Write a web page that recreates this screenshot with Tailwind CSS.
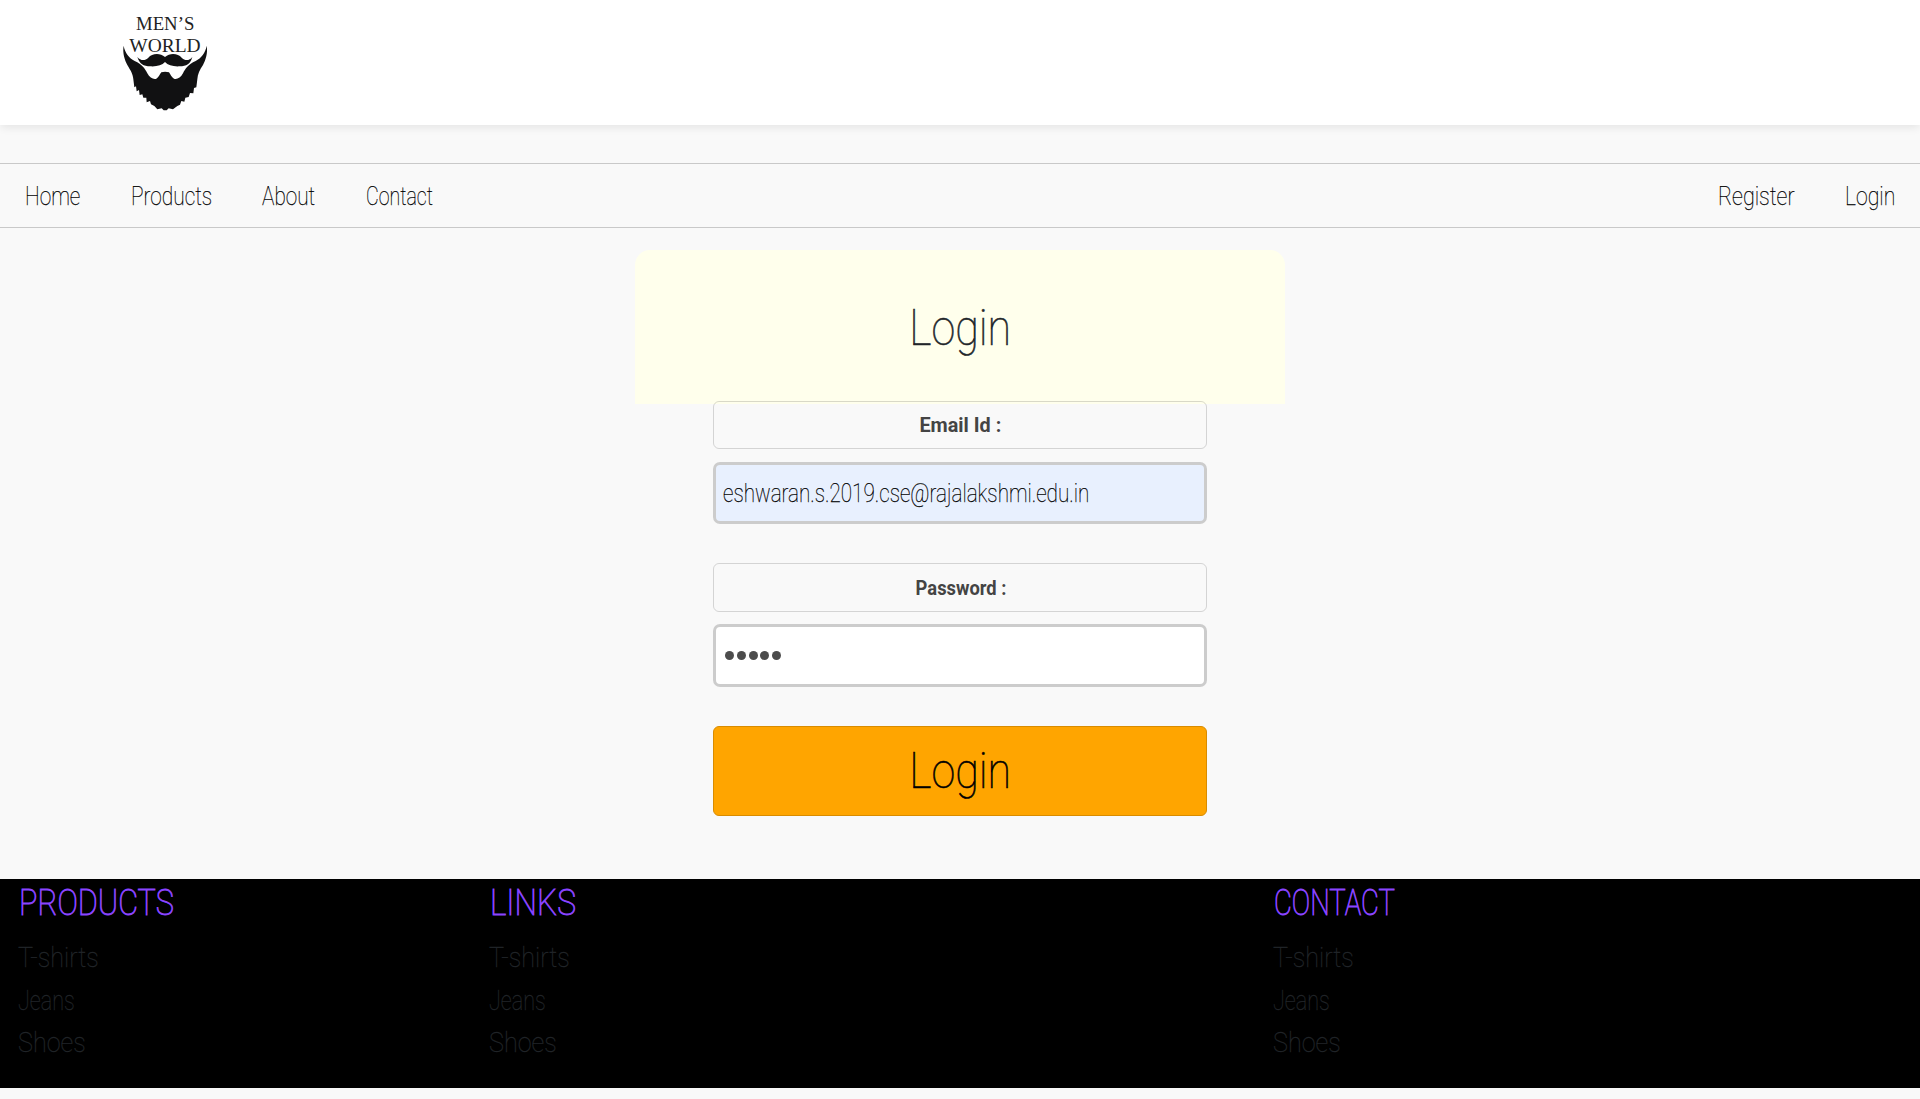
<!DOCTYPE html>
<html lang="en">
<head>
<meta charset="utf-8">
<title>Men's World - Login</title>
<script src="https://cdn.jsdelivr.net/npm/@tailwindcss/browser@4"></script>
</head>
<body class="h-[1099px] overflow-hidden bg-[#f9f9f9] font-['Roboto',sans-serif] font-thin text-[#212529]">
<header class="h-[125px] bg-white pl-[100px] shadow-[0_4px_8px_-1px_rgba(0,0,0,0.08)]">
  <svg class="block h-[125px] w-[130px]" viewBox="0 0 390 375" fill="#111112">
    <g font-family="Liberation Serif, serif" font-weight="400" fill="#222">
      <text x="108" y="91" font-size="56" textLength="175" lengthAdjust="spacingAndGlyphs">MEN’S</text>
      <text x="88" y="157" font-size="56" textLength="214" lengthAdjust="spacingAndGlyphs">WORLD</text>
    </g>
    <path d="M71 137C67 158 74 180 82 195C92 212 99 222 100 238L103 262L108 259L110 274L117 270L119 285L127 283L130 293L139 293L140 307L150 303L153 313L163 318L172 328L185 325L191 331L200 331L206 325L219 328L232 318L240 314L244 303L253 305L256 293L266 291L270 279L280 280L282 264L289 262L292 238C293 222 299 210 309 195C317 180 324 158 320 137C316 159 304 174 287 183C264 193 256 206 249 220C242 234 230 239 222 236C214 232 212 224 207 217Q195 213 184 217C178 224 177 232 169 236C161 239 149 234 142 220C135 206 127 193 104 183C87 174 75 159 71 137Z"/>
    <path d="M112 171C123 184 136 182 145 173C156 160 180 158 195 171C210 158 234 160 245 173C254 182 267 184 277 171C272 191 259 199 239 199C219 200 204 196 195 186C186 196 171 200 151 199C131 199 118 191 112 171Z"/>
  </svg>
</header>
<nav class="mt-[38px] flex h-[65px] items-center justify-between border-y border-[#c9c9c9] pl-[25px] text-[25px] leading-[63px] text-black [-webkit-text-stroke:0.25px_black]">
  <div class="flex pt-px">
    <a class="block w-[106px]"><span class="inline-block origin-left scale-x-[.835]">Home</span></a>
    <a class="block w-[131px]"><span class="inline-block origin-left scale-x-[.835]">Products</span></a>
    <a class="block w-[104px]"><span class="inline-block origin-left scale-x-[.83]">About</span></a>
    <a class="block w-[100px]"><span class="inline-block origin-left scale-x-[.785]">Contact</span></a>
  </div>
  <div class="flex pt-px">
    <a class="block w-[127px]"><span class="inline-block origin-left scale-x-[.86]">Register</span></a>
    <a class="block w-[75px]"><span class="inline-block origin-left scale-x-[.85]">Login</span></a>
  </div>
</nav>
<main class="flex h-[651px] flex-col items-center pt-[22px]">
  <div class="flex h-[154px] w-[650px] shrink-0 items-center justify-center rounded-t-[15px] bg-[#ffffec]">
    <h1 class="scale-x-[.86] pt-[2px] text-[50px] leading-[60px] [-webkit-text-stroke:0.6px_#212529]">Login</h1>
  </div>
  <form class="-mt-[3px] flex w-[494px] flex-col">
    <label class="flex h-[48px] items-center justify-center rounded-[6px] border border-black/15 pt-[2px] text-[21px] font-bold text-[#444]"><span class="scale-x-[.943]">Email Id :</span></label>
    <div class="mt-[13px] flex h-[62px] items-center rounded-[7px] border-3 border-[#ccc] bg-[#e8f0fe] pl-[7px] pt-[2px] text-[25px] text-black [-webkit-text-stroke:0.25px_black]"><span class="origin-left scale-x-[.827] whitespace-nowrap">eshwaran.s.2019.cse@rajalakshmi.edu.in</span></div>
    <label class="mt-[39px] flex h-[49px] items-center justify-center rounded-[6px] border border-black/15 pt-[2px] pl-px text-[21px] font-bold text-[#444]"><span class="scale-x-[.873]">Password :</span></label>
    <div class="mt-[12px] flex h-[63px] items-center gap-[2.8px] rounded-[7px] border-3 border-[#ccc] bg-white pl-[9px]">
      <i class="size-[9px] rounded-full bg-[#4c4c4c]"></i><i class="size-[9px] rounded-full bg-[#4c4c4c]"></i><i class="size-[9px] rounded-full bg-[#4c4c4c]"></i><i class="size-[9px] rounded-full bg-[#4c4c4c]"></i><i class="size-[9px] rounded-full bg-[#4c4c4c]"></i>
    </div>
    <button type="button" class="mt-[39px] flex h-[90px] items-center justify-center rounded-[6px] border border-[#d98c00] bg-[#ffa500] text-[50px] leading-[60px] text-black [-webkit-text-stroke:0.6px_black]"><span class="scale-x-[.86]">Login</span></button>
  </form>
</main>
<footer class="flex h-[209px] bg-black pl-[18px] pt-[3px] text-[27px] leading-[42.5px] [-webkit-text-stroke:0.3px_#212529]">
  <section class="w-[471px]">
    <h2 class="mb-[12px] ml-px w-fit origin-left scale-x-[.85] text-[36px] leading-[43px] text-[#8a44ff] [-webkit-text-stroke:0.9px_#8a44ff]">PRODUCTS</h2>
    <p class="w-fit origin-left scale-x-[.934]">T-shirts</p>
    <p class="w-fit origin-left scale-x-[.8]">Jeans</p>
    <p class="w-fit origin-left scale-x-[.933]">Shoes</p>
  </section>
  <section class="w-[784px]">
    <h2 class="mb-[12px] ml-px w-fit origin-left scale-x-[.88] text-[36px] leading-[43px] text-[#8a44ff] [-webkit-text-stroke:0.9px_#8a44ff]">LINKS</h2>
    <p class="w-fit origin-left scale-x-[.934]">T-shirts</p>
    <p class="w-fit origin-left scale-x-[.8]">Jeans</p>
    <p class="w-fit origin-left scale-x-[.933]">Shoes</p>
  </section>
  <section>
    <h2 class="mb-[12px] ml-px w-fit origin-left scale-x-[.765] text-[36px] leading-[43px] text-[#8a44ff] [-webkit-text-stroke:0.9px_#8a44ff]">CONTACT</h2>
    <p class="w-fit origin-left scale-x-[.934]">T-shirts</p>
    <p class="w-fit origin-left scale-x-[.8]">Jeans</p>
    <p class="w-fit origin-left scale-x-[.933]">Shoes</p>
  </section>
</footer>
</body>
</html>
